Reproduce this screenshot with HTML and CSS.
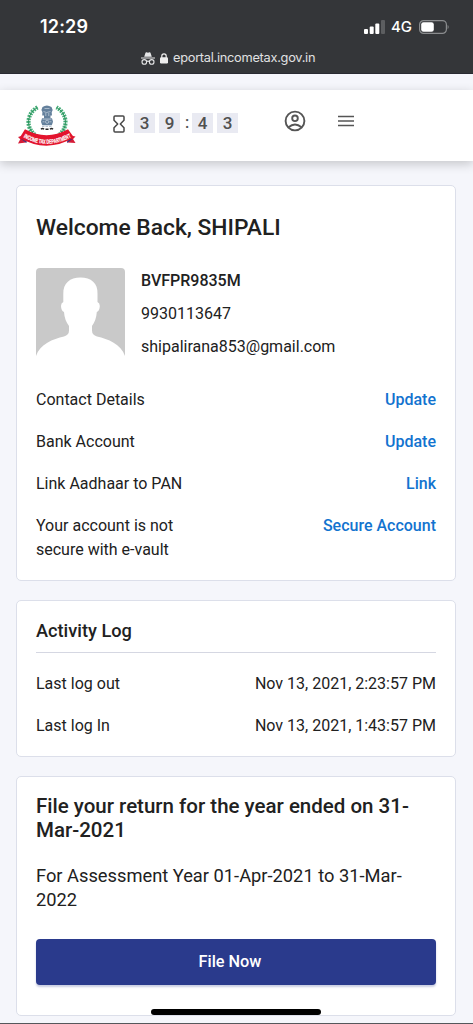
FILE: index.html
```html
<!DOCTYPE html>
<html lang="en">
<head>
<meta charset="utf-8">
<title>Income Tax e-Filing</title>
<link rel="stylesheet" href="styles.css">
</head>
<body>
<div class="browser">
  <div class="status">
    <span class="clock">12:29</span>
    <svg class="signal" width="21" height="14" viewBox="0 0 21 14"><g fill="#fff"><rect x="0" y="9" width="4" height="5" rx="1"/><rect x="5.7" y="6.5" width="4" height="7.5" rx="1"/><rect x="11.3" y="3.5" width="4" height="10.5" rx="1"/><rect x="17" y="0" width="4" height="14" rx="1" opacity=".2"/></g></svg>
    <span class="network">4G</span>
    <svg class="battery" width="30" height="14" viewBox="0 0 30 14"><rect x=".6" y=".6" width="26.8" height="12.8" rx="4" fill="none" stroke="#8a8c8e" stroke-width="1.2"/><rect x="2.2" y="2.2" width="12.6" height="9.6" rx="2.3" fill="#fff"/><path d="M28.6 5v4q1-.6 1-2t-1-2z" fill="#8a8c8e"/></svg>
  </div>
  <div class="address">
    <svg width="14" height="13" viewBox="0 0 14 13"><path d="M3.2 4.8 4.5.8Q4.8.1 5.6.3L7 .7 8.4.3q.8-.2 1.1.5l1.3 4z" fill="#e5e6e7"/><path d="M0 6h14M5.3 9.6q1.7-1 3.4 0" stroke="#e5e6e7" stroke-width="1.1" fill="none"/><circle cx="3.3" cy="9.9" r="2.3" fill="none" stroke="#e5e6e7" stroke-width="1.1"/><circle cx="10.7" cy="9.9" r="2.3" fill="none" stroke="#e5e6e7" stroke-width="1.1"/></svg>
    <svg width="8" height="11" viewBox="0 0 8 11"><rect y="4.2" width="8" height="6.3" rx="1.2" fill="#eee"/><path d="M1.8 5V3a2.2 2.2 0 0 1 4.4 0v2" fill="none" stroke="#eee" stroke-width="1.2"/></svg>
    <span class="url">eportal.incometax.gov.in</span>
  </div>
</div>
<header class="header">
  <svg class="logo" width="60" height="44" viewBox="0 0 60 44">
    <defs><path id="band" d="M6.500 33.200Q29.500 46.500 54 33.200"/></defs>
    <path d="M20.500 3.400A18.500 17 0 1 0 39.500 3.400" fill="none" stroke="#45ad78" stroke-width="4.200" stroke-dasharray="1.8 1"/>
    <path d="M20.500 3.400A18.500 17 0 1 0 39.500 3.400" fill="none" stroke="#278e58" stroke-width=".9"/>
    <g fill="#64809c"><path d="M25.500 3q4.300-3.200 9 0l1.200 3-1 2.200.3 3.300h-9.800l.2-3.500-1-2z"/><rect x="27" y="11" width="6.500" height="3.500"/><path d="M25 14.200h10l1 3.500-1.200 3.500h-9.500L24 17.700z"/></g>
    <g stroke="#c5d2df" stroke-width=".7" fill="none"><path d="M27.500 4.500h5M26.500 7.500l3 1 4-1M28.800 9v3M31.800 9v3M25.500 15.200h9"/><circle cx="30.100" cy="17.800" r="1.600"/><path d="M25.500 17.800h2M32.500 17.800h2"/></g>
    <path d="M25 22.400h10" stroke="#9faec0" stroke-width=".8" stroke-dasharray="2.500 1"/>
    <path d="M24 25.200q1.500-1.500 3 0M28.500 25.300h3M33 25.200q1.500-1.500 3 0" stroke="#252525" stroke-width="1.500" fill="none"/>
    <path d="M6 31.500 1 33l2.300 2.300L1 39.500 9 38.500zM53 31.500l5.500 1-2.500 2.500 2.500 4-8-.5z" fill="#d51b36"/>
    <path d="M4 35 9.500 39 10 35zM50 39l5.500-4-5-1z" fill="#3b347e"/>
    <path d="M8 25.300Q29.500 37 51 25.300L57 33.500Q30 49.500 2.500 34z" fill="#e3142d"/>
    <text class="motto"><textPath href="#band" textLength="50" lengthAdjust="spacingAndGlyphs">INCOME TAX DEPARTMENT</textPath></text>
  </svg>
  <svg class="hourglass" width="12" height="18" viewBox="0 0 12 18"><path d="M2 1h8q1 0 1 1v3.300L7.300 9 11 12.700V16q0 1-1 1H2q-1 0-1-1v-3.300L4.700 9 1 5.300V2q0-1 1-1z" fill="none" stroke="#484848" stroke-width="1.500" stroke-linejoin="round"/></svg>
  <div class="timer"><b>3</b><b>9</b><i>:</i><b>4</b><b>3</b></div>
  <svg class="account" width="22" height="22" viewBox="0 0 22 22" fill="none" stroke="#555" stroke-width="1.900"><circle cx="11" cy="11" r="9.400"/><circle cx="11" cy="8.300" r="2.800"/><path d="M4.500 17.200q6.500-5.600 13 0"/></svg>
  <svg class="menu" width="16" height="12" viewBox="0 0 16 12"><path d="M0 1.500h16M0 6h16M0 10.500h16" stroke="#555" stroke-width="1.700"/></svg>
</header>
<main class="content">
  <section class="card welcome">
    <h1 class="title">Welcome Back, SHIPALI</h1>
    <div class="profile">
      <svg class="avatar" width="89" height="89" viewBox="0 0 89 89"><rect width="89" height="94" rx="4" fill="#c9c9c9"/><path d="M0 89v-1C4 76 17 71 28 68.500q5-1.500 5-6V58Q28.500 52 28 44q-2.800-1-3-6 0-3 2.300-4V26C27 15 34 9.500 44.500 9.500S62 15 61.500 26v8q2.300 1 2.300 4-.2 5-3 6-.5 8-4.800 14v4.500q0 4.500 5 6C72 71 85 76 89 88v1z" fill="#fff"/></svg>
      <div class="identity"><strong>BVFPR9835M</strong><span>9930113647</span><span>shipalirana853@gmail.com</span></div>
    </div>
    <div class="rows">
      <div class="row"><span>Contact Details</span><a>Update</a></div>
      <div class="row"><span>Bank Account</span><a>Update</a></div>
      <div class="row"><span>Link Aadhaar to PAN</span><a>Link</a></div>
      <div class="row"><span>Your account is not<br>secure with e-vault</span><a>Secure Account</a></div>
    </div>
  </section>
  <section class="card activity">
    <h2 class="heading">Activity Log</h2>
    <div class="rows">
      <div class="row"><span>Last log out</span><span>Nov 13, 2021, 2:23:57 PM</span></div>
      <div class="row"><span>Last log In</span><span>Nov 13, 2021, 1:43:57 PM</span></div>
    </div>
  </section>
  <section class="card filing">
    <h2 class="filing-title">File your return for the year ended on 31-<br>Mar-2021</h2>
    <p class="period">For Assessment Year 01-Apr-2021 to 31-Mar-<br>2022</p>
    <button class="file-button">File Now</button>
  </section>
</main>
<div class="home-indicator"></div>
</body>
</html>
```

FILE: styles.css
```css
* { box-sizing: border-box; }
body {
  margin: 0;
  height: 1024px;
  overflow: hidden;
  background: #f5f6fb;
  border-bottom: 1px solid #55575b;
  color: #212121;
  font: 16px/24px Roboto, sans-serif;
}
h1, h2, p { margin: 0; }
svg { display: block; flex: none; }
.browser {
  height: 74px;
  padding-top: 15px;
  background: #343639;
  border-bottom: 1px solid #292a32;
  color: #fff;
  font-family: Inter, sans-serif;
}
.status { display: flex; align-items: center; height: 24px; padding-left: 40px; }
.clock { width: 324px; font-size: 18px; font-weight: 600; letter-spacing: .15px; }
.network { margin-left: 6px; width: 28px; font-size: 15px; font-weight: 500; }
.address { display: flex; align-items: center; height: 20px; margin-top: 9px; padding-left: 141px; }
.address svg + svg { margin-left: 5px; }
.url { margin-left: 5px; font-size: 12.8px; letter-spacing: -.28px; color: #e0e1e2; white-space: nowrap; }
.header {
  position: relative;
  display: flex;
  align-items: center;
  height: 71px;
  margin-top: 16px;
  padding-left: 17px;
  background: #fff;
  box-shadow: 0 3px 10px rgba(0, 0, 0, .2);
}
.motto { font: 700 6px "Liberation Sans", sans-serif; fill: #fff; stroke: #fff; stroke-width: .2px; }
.logo { margin-top: 1px; }
.hourglass { margin: -4px 0 0 36px; }
.timer { display: flex; align-items: center; margin: -6px 0 0 9px; color: #505050; }
.timer b { width: 21px; height: 20px; margin-right: 4px; background: #e9eaf2; text-align: center; font-size: 17px; line-height: 20px; font-weight: 500; }
.timer i { width: 4px; margin: 0 3px 0 1px; text-align: center; font-style: normal; font-weight: 500; line-height: 20px; }
.account { margin: -9px 0 0 42px; }
.menu { margin: -9px 0 0 32px; }
.content { display: flex; flex-direction: column; gap: 19px; padding: 24px 17px 0 16px; }
.card { padding: 0 19px; background: #fff; border: 1px solid #dcdfea; border-radius: 5px; }
.welcome { height: 396px; padding-top: 26px; }
.title { font-size: 22.8px; line-height: 32px; font-weight: 500; }
.profile { display: flex; gap: 16px; margin-top: 24px; }
.identity { display: flex; flex-direction: column; gap: 9px; padding-top: 1px; }
.identity strong { font-weight: 500; }
.rows { display: flex; flex-direction: column; gap: 18.2px; margin-top: 28.7px; }
.row { display: flex; justify-content: space-between; }
.row a { color: #1273cf; font-weight: 500; }
.activity { height: 157px; padding-top: 17px; }
.heading { height: 35px; border-bottom: 1px solid #d5d7e2; font-size: 18.2px; line-height: 26px; font-weight: 500; }
.activity .rows { margin-top: 19px; }
.filing { height: 240px; padding-top: 17px; }
.filing-title { font-size: 20.5px; font-weight: 500; white-space: nowrap; }
.period { margin-top: 22px; font-size: 18.3px; white-space: nowrap; }
.file-button { display: block; width: 100%; height: 46px; margin-top: 27px; border: 0; border-radius: 4px; padding: 0 12px 1px 0; background: #2a3a8c; color: #fff; font: 500 16.3px Roboto, sans-serif; box-shadow: 0 2px 2px rgba(42, 58, 140, .25); }
.home-indicator { position: absolute; left: 151px; top: 1009px; width: 170px; height: 6px; border-radius: 3px; background: #000; }
```
